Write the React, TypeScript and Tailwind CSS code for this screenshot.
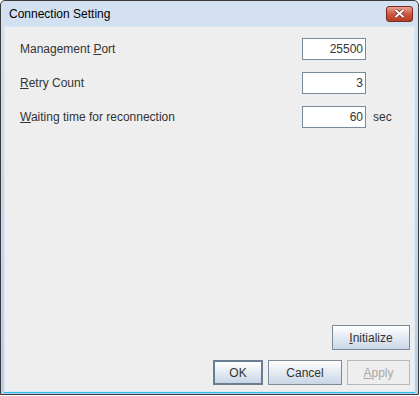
import React from "react";

const font = { fontFamily: '"Liberation Sans", Arial, sans-serif' };

function Field({ label, mnemonic, value, suffix }: { label: string; mnemonic: number; value: string; suffix?: string }) {
  return (
    <div className="flex h-[34px] items-center">
      <span className="w-[282px] text-[12px] text-[#333]">
        {label.slice(0, mnemonic)}
        <span className="underline">{label[mnemonic]}</span>
        {label.slice(mnemonic + 1)}
      </span>
      <div className="flex h-[22px] w-[64px] items-center justify-end border border-[#7a8a99] bg-white pr-[2px] text-[12px] text-[#333]">
        {value}
      </div>
      {suffix && <span className="ml-[7px] text-[12px] text-[#333]">{suffix}</span>}
    </div>
  );
}

function Btn({ children, w, primary, disabled }: { children: React.ReactNode; w: string; primary?: boolean; disabled?: boolean }) {
  const base = "flex h-[25px] items-center justify-center text-[12px]";
  if (disabled)
    return <div className={`${base} ${w} border border-[#b8b8b8] bg-[#eeeeee] text-[#a8a8a8]`}>{children}</div>;
  return (
    <div
      className={`${base} ${w} ${primary ? "border-2 border-[#6b7d90]" : "border border-[#7a8a99]"} bg-gradient-to-b from-white to-[#c9d6e5] text-[#333]`}
    >
      {children}
    </div>
  );
}

export default function App() {
  return (
    <div style={font} className="h-[396px] w-[420px] bg-white">
      <div className="flex h-[395px] w-[419px] flex-col rounded-t-[5px] border border-[#3a3a3a] bg-gradient-to-b from-[#d3e1f1] to-[#b9cfe7]">
        <div className="flex h-[25px] shrink-0 items-center justify-between pl-[8px] pr-[5px]">
          <span className="pt-[1px] text-[12px] text-black">Connection Setting</span>
          <div className="flex h-[16px] w-[27px] items-center justify-center rounded-[3px] border border-[#7a2a1e] bg-gradient-to-b from-[#e9a393] via-[#cf5840] to-[#b53a22]">
            <svg width="11" height="9" viewBox="0 0 11 9">
              <path d="M1.5 1 L9.5 8 M9.5 1 L1.5 8" stroke="#5a2418" strokeWidth="3.2" />
              <path d="M1.5 1 L9.5 8 M9.5 1 L1.5 8" stroke="white" strokeWidth="2" />
            </svg>
          </div>
        </div>
        <div className="mx-[3px] mb-[2px] flex flex-1 flex-col border border-[#dbe8f5] bg-[#eeeeee] shadow-[0_1px_0_#29c0e8]">
          <div className="flex flex-col pl-[15px] pt-[5px]">
            <Field label="Management Port" mnemonic={11} value="25500" />
            <Field label="Retry Count" mnemonic={0} value="3" />
            <Field label="Waiting time for reconnection" mnemonic={0} value="60" suffix="sec" />
          </div>
          <div className="flex-1" />
          <div className="flex justify-end pr-[4px]">
            <Btn w="w-[78px]">
              <span><span className="underline">I</span>nitialize</span>
            </Btn>
          </div>
          <div className="mb-[6px] mt-[10px] flex justify-end gap-[5px] pr-[4px]">
            <Btn w="w-[50px]" primary>OK</Btn>
            <Btn w="w-[74px]">Cancel</Btn>
            <Btn w="w-[63px]" disabled>
              <span><span className="underline">A</span>pply</span>
            </Btn>
          </div>
        </div>
      </div>
    </div>
  );
}
